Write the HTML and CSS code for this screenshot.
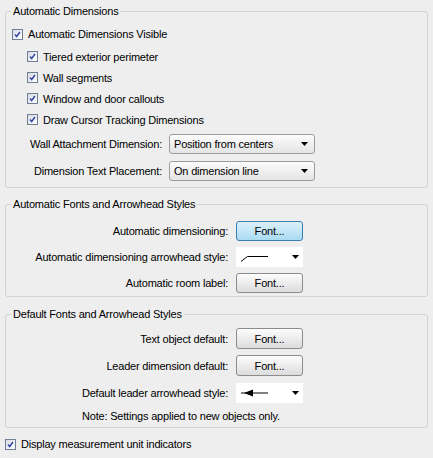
FILE: index.html
```html
<!DOCTYPE html>
<html>
<head>
<meta charset="utf-8">
<link rel="stylesheet" href="styles.css">
</head>
<body>
<div class="page">
  <fieldset class="group group-dims">
    <legend>Automatic Dimensions</legend>
    <label class="check check-main"><span class="box"><svg viewBox="0 0 11 11" width="11" height="11"><path d="M2.5 5.5 L4.5 8 L8.5 2.5" fill="none" stroke="#3347a8" stroke-width="1.8"/></svg></span>Automatic Dimensions Visible</label>
    <div class="subs">
      <label class="check check-sub"><span class="box"><svg viewBox="0 0 11 11" width="11" height="11"><path d="M2.5 5.5 L4.5 8 L8.5 2.5" fill="none" stroke="#3347a8" stroke-width="1.8"/></svg></span>Tiered exterior perimeter</label>
      <label class="check check-sub"><span class="box"><svg viewBox="0 0 11 11" width="11" height="11"><path d="M2.5 5.5 L4.5 8 L8.5 2.5" fill="none" stroke="#3347a8" stroke-width="1.8"/></svg></span>Wall segments</label>
      <label class="check check-sub"><span class="box"><svg viewBox="0 0 11 11" width="11" height="11"><path d="M2.5 5.5 L4.5 8 L8.5 2.5" fill="none" stroke="#3347a8" stroke-width="1.8"/></svg></span>Window and door callouts</label>
      <label class="check check-sub"><span class="box"><svg viewBox="0 0 11 11" width="11" height="11"><path d="M2.5 5.5 L4.5 8 L8.5 2.5" fill="none" stroke="#3347a8" stroke-width="1.8"/></svg></span>Draw Cursor Tracking Dimensions</label>
    </div>
    <div class="dim-grid">
      <span class="lbl">Wall Attachment Dimension:</span>
      <div class="combo"><span>Position from centers</span><svg class="caret" viewBox="0 0 7 4" width="7" height="4"><polygon points="0,0 7,0 3.5,4" fill="#000"/></svg></div>
      <span class="lbl">Dimension Text Placement:</span>
      <div class="combo"><span>On dimension line</span><svg class="caret" viewBox="0 0 7 4" width="7" height="4"><polygon points="0,0 7,0 3.5,4" fill="#000"/></svg></div>
    </div>
  </fieldset>

  <fieldset class="group group-auto">
    <legend>Automatic Fonts and Arrowhead Styles</legend>
    <div class="font-grid">
      <span class="lbl">Automatic dimensioning:</span>
      <button class="btn btn-focus">Font...</button>
      <span class="lbl">Automatic dimensioning arrowhead style:</span>
      <div class="arrow-combo">
        <svg viewBox="0 0 30 10" width="30" height="10"><path d="M1 9.5 L7.5 4.5 L28 4.5" fill="none" stroke="#000" stroke-width="1"/></svg>
        <svg class="caret" viewBox="0 0 7 4" width="7" height="4"><polygon points="0,0 7,0 3.5,4" fill="#000"/></svg>
      </div>
      <span class="lbl">Automatic room label:</span>
      <button class="btn">Font...</button>
    </div>
  </fieldset>

  <fieldset class="group group-default">
    <legend>Default Fonts and Arrowhead Styles</legend>
    <div class="font-grid font-grid-default">
      <span class="lbl">Text object default:</span>
      <button class="btn">Font...</button>
      <span class="lbl">Leader dimension default:</span>
      <button class="btn">Font...</button>
      <span class="lbl">Default leader arrowhead style:</span>
      <div class="arrow-combo">
        <svg viewBox="0 0 30 10" width="30" height="10"><path d="M1 5 L28 5" stroke="#000" stroke-width="1"/><polygon points="4,5 13,1.5 13,8.5" fill="#000"/></svg>
        <svg class="caret" viewBox="0 0 7 4" width="7" height="4"><polygon points="0,0 7,0 3.5,4" fill="#000"/></svg>
      </div>
      <p class="note">Note: Settings applied to new objects only.</p>
    </div>
  </fieldset>

  <label class="check check-bottom"><span class="box"><svg viewBox="0 0 11 11" width="11" height="11"><path d="M2.5 5.5 L4.5 8 L8.5 2.5" fill="none" stroke="#3347a8" stroke-width="1.8"/></svg></span>Display measurement unit indicators</label>
</div>
</body>
</html>
```

FILE: styles.css
```css
html, body {
  margin: 0;
  padding: 0;
  background: #eeeeee;
}

body {
  font-family: "Liberation Sans", Arial, sans-serif;
  font-size: 11px;
  letter-spacing: -0.2px;
  color: #000;
}

.page {
  width: 433px;
  height: 458px;
  box-sizing: border-box;
  padding: 5px 5px 0 5px;
  display: flex;
  flex-direction: column;
}

.group {
  margin: 0;
  padding: 0;
  border: 1px solid #d3d3d3;
  border-radius: 3px;
  min-inline-size: 0;
}

.group legend {
  margin-left: 5px;
  padding: 0 2px;
  line-height: 12px;
  height: 12px;
}

.check {
  display: flex;
  align-items: center;
  gap: 5px;
  height: 20px;
}

.box {
  width: 11px;
  height: 11px;
  box-sizing: border-box;
  border: 1px solid #6f7f95;
  background: linear-gradient(135deg, #d8dbe2, #ffffff);
  display: flex;
  align-items: center;
  justify-content: center;
  flex: none;
}

.box svg {
  display: block;
  width: 9px;
  height: 9px;
}

.check-main {
  margin-top: 7px;
  padding-left: 6px;
}

.subs {
  margin-top: 2px;
  display: flex;
  flex-direction: column;
}

.check-sub {
  height: 21px;
  padding-left: 21px;
}

.dim-grid {
  margin-top: 4px;
  padding-bottom: 6px;
  display: grid;
  grid-template-columns: 156px 146px;
  column-gap: 7px;
  row-gap: 7px;
  align-items: center;
}

.lbl {
  text-align: right;
  white-space: nowrap;
}

.combo {
  height: 20px;
  box-sizing: border-box;
  border: 1px solid #9c9c9c;
  border-radius: 3px;
  background: linear-gradient(#fcfcfc, #e4e4e4);
  display: flex;
  align-items: center;
  justify-content: space-between;
  padding: 0 6px 0 4px;
}

.caret {
  display: block;
  flex: none;
}

.group-auto {
  margin-top: 10px;
}

.font-grid {
  padding-top: 11px;
  padding-bottom: 3px;
  display: grid;
  grid-template-columns: 222px 67px;
  column-gap: 8px;
  row-gap: 6px;
  grid-auto-rows: 20px;
  align-items: center;
}

.btn {
  height: 20px;
  width: 67px;
  box-sizing: border-box;
  margin: 0;
  padding: 0;
  font: inherit;
  letter-spacing: inherit;
  color: #000;
  border: 1px solid #8c8c8c;
  border-radius: 3px;
  background: linear-gradient(#fdfdfd, #dcdcdc);
}

.btn-focus {
  border-color: #3c7fb1;
  background: linear-gradient(#dcf1fb, #a9dbf2);
}

.arrow-combo {
  height: 20px;
  background: #fff;
  display: flex;
  align-items: center;
  justify-content: space-between;
  padding: 0 4px 0 4px;
}

.arrow-combo svg:first-child {
  display: block;
}

.group-default {
  margin-top: 11px;
}

.font-grid-default {
  padding-top: 8px;
  padding-bottom: 4px;
  grid-template-rows: 21px 21px 21px 14px;
}

.font-grid-default .btn {
  height: 21px;
}

.note {
  grid-column: 1 / -1;
  margin: 0;
  padding-left: 76px;
  line-height: 14px;
}

.check-bottom {
  margin-top: 6px;
}
```
